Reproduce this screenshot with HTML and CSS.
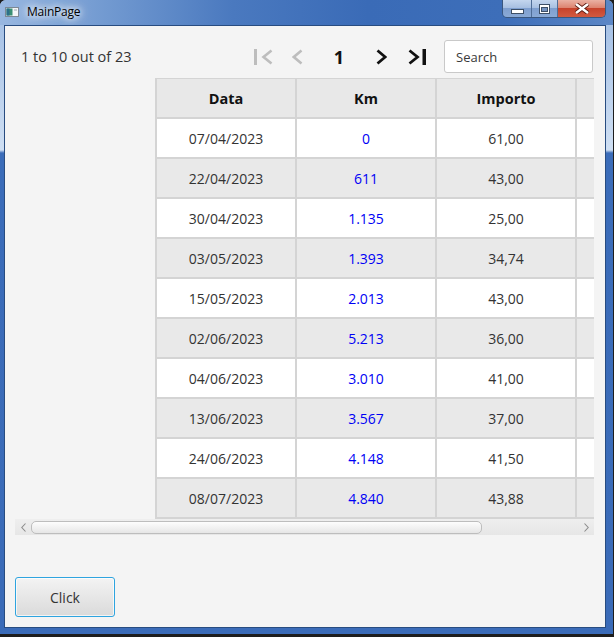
FILE: index.html
```html
<!DOCTYPE html>
<html>
<head>
<title>MainPage</title>
<link rel="stylesheet" href="styles.css">
</head>
<body>
<div class="window">
  <div class="titlebar">
    <svg class="app-icon" width="14" height="10" viewBox="0 0 14 10">
      <rect x="0.5" y="0.5" width="13" height="9" fill="#f4f6f8" stroke="#7d8894"/>
      <rect x="1.5" y="1.5" width="6" height="7" fill="#3a8f74"/>
      <rect x="1.5" y="1.5" width="3" height="7" fill="#2b6f8a"/>
      <rect x="9" y="2" width="3" height="2" fill="#c9d1d8"/>
    </svg>
    <span class="title">MainPage</span>
    <div class="caption-buttons">
      <div class="cap cap-min">
        <svg width="13" height="6" viewBox="0 0 13 6"><rect x="0.5" y="0.5" width="12" height="4" fill="#fff" stroke="#3d4f66"/></svg>
      </div>
      <div class="cap cap-max">
        <svg width="11" height="10" viewBox="0 0 11 10"><rect x="0.5" y="0.5" width="10" height="9" fill="#fff" stroke="#3d4f66"/><rect x="2.5" y="3.5" width="6" height="4" fill="#7593c0" stroke="#3d4f66"/></svg>
      </div>
      <div class="cap cap-close">
        <svg width="16" height="11" viewBox="0 0 16 11">
          <path d="M2 1 L14 10 M14 1 L2 10" stroke="#5a1a10" stroke-width="4.2"/>
          <path d="M2 1 L14 10 M14 1 L2 10" stroke="#fff" stroke-width="2.4"/>
        </svg>
      </div>
    </div>
  </div>

  <div class="frame-body">
    <div class="client">
      <div class="toolbar">
        <span class="count">1 to 10 out of 23</span>
        <div class="pager">
          <div class="pg pg-first">
            <svg width="19" height="16" viewBox="0 0 19 16"><rect x="0" y="0" width="3" height="16" fill="#bdbdbd"/><polyline points="17.5,1.5 9.5,8 17.5,14.5" fill="none" stroke="#bdbdbd" stroke-width="2.6"/></svg>
          </div>
          <div class="pg pg-prev">
            <svg width="11" height="16" viewBox="0 0 11 16"><polyline points="9.5,1.5 1.8,8 9.5,14.5" fill="none" stroke="#bdbdbd" stroke-width="2.6"/></svg>
          </div>
          <div class="pg pg-num">1</div>
          <div class="pg pg-next">
            <svg width="11" height="16" viewBox="0 0 11 16"><polyline points="1.5,1.5 9.2,8 1.5,14.5" fill="none" stroke="#111" stroke-width="2.8"/></svg>
          </div>
          <div class="pg pg-last">
            <svg width="19" height="16" viewBox="0 0 19 16"><polyline points="1.5,1.5 9.5,8 1.5,14.5" fill="none" stroke="#111" stroke-width="2.8"/><rect x="14.5" y="0" width="3.5" height="16" fill="#111"/></svg>
          </div>
        </div>
        <input class="search" type="text" placeholder="Search">
      </div>

      <div class="table-scroll">
        <div class="table">
          <div class="cell head">Data</div><div class="cell head">Km</div><div class="cell head">Importo</div><div class="cell head"></div>

          <div class="cell">07/04/2023</div><div class="cell km">0</div><div class="cell">61,00</div><div class="cell"></div>
          <div class="cell odd">22/04/2023</div><div class="cell odd km">611</div><div class="cell odd">43,00</div><div class="cell odd"></div>
          <div class="cell">30/04/2023</div><div class="cell km">1.135</div><div class="cell">25,00</div><div class="cell"></div>
          <div class="cell odd">03/05/2023</div><div class="cell odd km">1.393</div><div class="cell odd">34,74</div><div class="cell odd"></div>
          <div class="cell">15/05/2023</div><div class="cell km">2.013</div><div class="cell">43,00</div><div class="cell"></div>
          <div class="cell odd">02/06/2023</div><div class="cell odd km">5.213</div><div class="cell odd">36,00</div><div class="cell odd"></div>
          <div class="cell">04/06/2023</div><div class="cell km">3.010</div><div class="cell">41,00</div><div class="cell"></div>
          <div class="cell odd">13/06/2023</div><div class="cell odd km">3.567</div><div class="cell odd">37,00</div><div class="cell odd"></div>
          <div class="cell">24/06/2023</div><div class="cell km">4.148</div><div class="cell">41,50</div><div class="cell"></div>
          <div class="cell odd">08/07/2023</div><div class="cell odd km">4.840</div><div class="cell odd">43,88</div><div class="cell odd"></div>
        </div>

        <div class="hscroll">
          <div class="arrow">
            <svg width="5" height="9" viewBox="0 0 5 9"><polyline points="4.5,0.5 0.8,4.5 4.5,8.5" fill="none" stroke="#8c8c8c" stroke-width="1.1"/></svg>
          </div>
          <div class="thumb"></div>
          <div class="arrow arrow-right">
            <svg width="5" height="9" viewBox="0 0 5 9"><polyline points="0.5,0.5 4.2,4.5 0.5,8.5" fill="none" stroke="#8c8c8c" stroke-width="1.1"/></svg>
          </div>
        </div>
      </div>

      <button class="btn-click">Click</button>
    </div>
  </div>
</div>
</body>
</html>
```

FILE: styles.css
```css
body {
  margin: 0;
  padding: 0;
  background-color: #1d1d1d;
  font-family: "Open Sans", sans-serif;
}

.window {
  width: 613px;
  height: 634px;
  display: flex;
  flex-direction: column;
  border-radius: 6px 6px 0 0;
  overflow: hidden;
  background: linear-gradient(to bottom, #9fbce3 0, #cfdff3 150px, #3b6cb9 153px, #3a6bb8 100%);
}

/* title bar */

.titlebar {
  height: 25px;
  flex: none;
  display: flex;
  align-items: flex-start;
  background: linear-gradient(to right, #98b7e0 0, #7ca2d5 12%, #4a79bf 38%, #3a6bb7 60%, #3d6eb9 82%, #5c87c6 100%);
}

.app-icon {
  margin: 7px 0 0 5px;
  flex: none;
}

.title {
  margin: 4px 0 0 8px;
  padding: 0 10px 0 0;
  font-size: 12px;
  line-height: 16px;
  letter-spacing: -0.2px;
  color: #000;
  text-shadow: 0 0 6px #fff, 0 0 10px rgba(255, 255, 255, 0.9), 0 0 14px rgba(255, 255, 255, 0.7);
}

.caption-buttons {
  display: flex;
  margin-left: auto;
  margin-right: 7px;
  height: 17px;
  border: 1px solid #3a577f;
  border-top: none;
  border-radius: 0 0 5px 5px;
  overflow: hidden;
}

.cap {
  display: flex;
  align-items: center;
  justify-content: center;
  height: 17px;
}

.cap-min,
.cap-max {
  background: linear-gradient(to bottom, #c4d6ee 0, #a8c0e2 45%, #7f9fcf 50%, #8aaad6 100%);
  border-right: 1px solid #4f6d97;
}

.cap-min {
  width: 28px;
}

.cap-min svg {
  margin-top: 6px;
}

.cap-max {
  width: 25px;
}

.cap-close {
  width: 47px;
  background: linear-gradient(to bottom, #eab1a3 0, #dd8470 45%, #c7432c 50%, #d25a40 100%);
}

/* client area */

.frame-body {
  flex: 1;
  display: flex;
  padding: 0 7px 6px 4px;
}

.client {
  flex: 1;
  border: 1px solid #284c80;
  background-color: #f4f4f4;
}

.toolbar {
  display: flex;
  align-items: center;
  height: 33px;
  margin-top: 14px;
  padding: 0 12px 0 16px;
}

.count {
  flex: 1;
  font-size: 14.5px;
  color: #333;
}

.pager {
  display: flex;
  align-items: center;
  height: 33px;
}

.pg {
  display: flex;
  align-items: center;
  justify-content: center;
  height: 33px;
}

.pg-first { width: 34px; }
.pg-prev { width: 34px; }
.pg-next { width: 35px; }
.pg-last { width: 36px; }

.pg-num {
  width: 50px;
  font-size: 18px;
  font-weight: bold;
  color: #111;
}

.search {
  width: 149px;
  height: 33px;
  box-sizing: border-box;
  margin-left: 9px;
  padding: 0 0 0 11px;
  border: 1px solid #c9c9c9;
  border-radius: 3px;
  background-color: #fff;
  font-family: "Open Sans", sans-serif;
  font-size: 13px;
  color: #333;
  outline: none;
}

.search::placeholder {
  color: #3a3a3a;
}

/* table */

.table-scroll {
  width: 579px;
  margin: 5px 0 0 10px;
  overflow: hidden;
}

.table {
  display: grid;
  grid-template-columns: repeat(4, 140px);
  width: 562px;
  margin-left: 140px;
  border-left: 2px solid #d4d4d4;
  border-top: 1px solid #d4d4d4;
}

.cell {
  height: 40px;
  box-sizing: border-box;
  display: flex;
  align-items: center;
  justify-content: center;
  border-right: 2px solid #d4d4d4;
  border-bottom: 2px solid #d4d4d4;
  background-color: #fff;
  font-size: 14px;
  color: #333;
}

.cell.odd {
  background-color: #e9e9e9;
}

.cell.head {
  background-color: #e8e8e8;
  font-size: 14.5px;
  font-weight: bold;
  color: #111;
}

.cell.km {
  color: #0000f5;
}

.hscroll {
  display: flex;
  align-items: center;
  height: 16px;
  background: linear-gradient(to bottom, #eeeeee, #e6e6e6);
}

.arrow {
  width: 16px;
  height: 16px;
  display: flex;
  align-items: center;
  justify-content: center;
}

.arrow-right {
  margin-left: auto;
}

.thumb {
  width: 451px;
  height: 13px;
  box-sizing: border-box;
  border: 1px solid #bdbdbd;
  border-radius: 5px;
  background: linear-gradient(to bottom, #fdfdfd, #e6e6e6);
}

.btn-click {
  display: block;
  width: 100px;
  height: 40px;
  margin: 42px 0 0 10px;
  border: 1px solid #2ea4df;
  border-radius: 3px;
  background: linear-gradient(to bottom, #f3f3f3, #dadada);
  box-shadow: inset 0 0 0 1px rgba(255, 255, 255, 0.7);
  font-family: "Open Sans", sans-serif;
  font-size: 14px;
  color: #333;
  cursor: pointer;
}
```
